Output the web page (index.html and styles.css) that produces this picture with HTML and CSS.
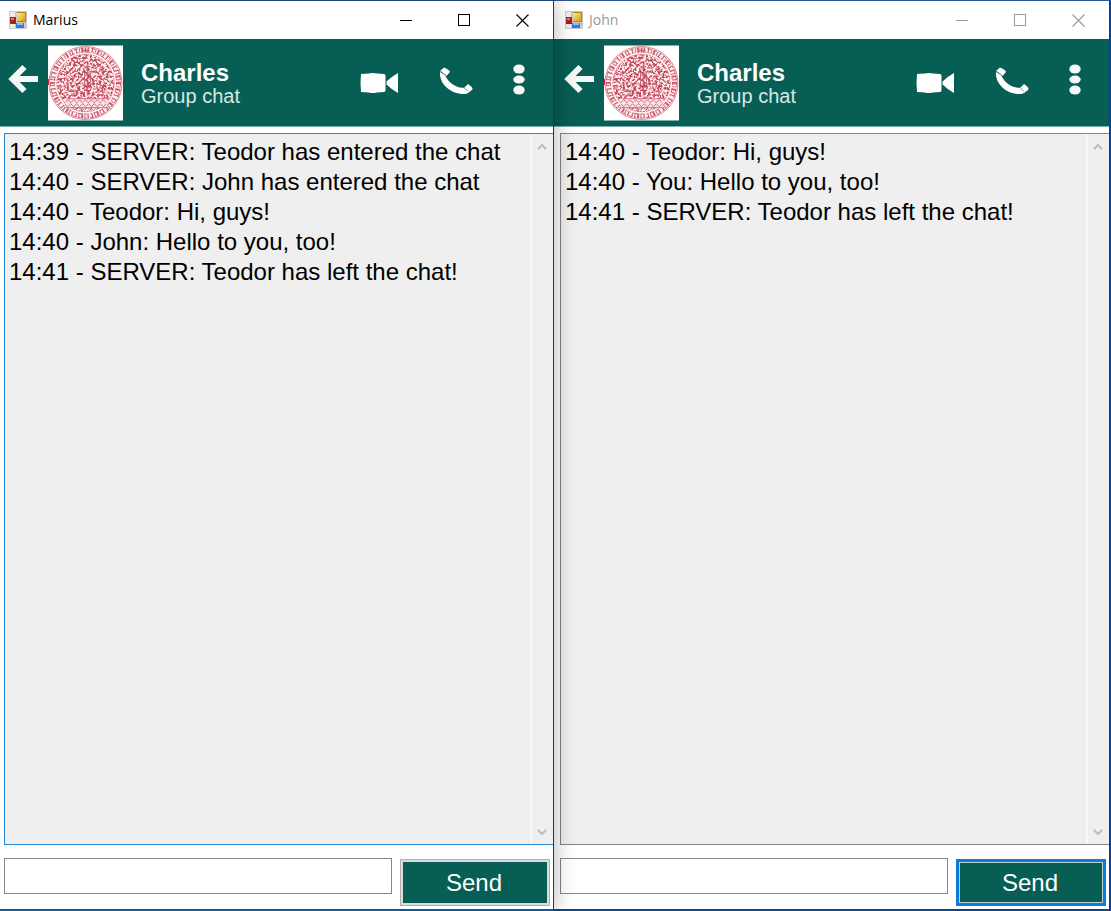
FILE: index.html
```html
<!DOCTYPE html>
<html lang="en">
<head>
<meta charset="utf-8">
<title>Group chat</title>
<link rel="stylesheet" href="styles.css">
</head>
<body>
<svg class="symbols" aria-hidden="true">
  <defs>
    <linearGradient id="gold" x2="1" y2="1"><stop offset="0" stop-color="#ffe89a"/><stop offset="1" stop-color="#dfa000"/></linearGradient>
    <filter id="engraving" x="0" y="0" width="1" height="1" color-interpolation-filters="sRGB">
      <feTurbulence type="fractalNoise" baseFrequency="0.42" numOctaves="2" seed="7"/>
      <feColorMatrix values="0 0 0 0 0.78  0 0 0 0 0.28  0 0 0 0 0.36  5 0 0 0 -2.1"/>
    </filter>
    <clipPath id="disc"><circle cx="38" cy="38" r="29"/></clipPath>
    <symbol id="app" viewBox="0 0 18 18">
      <rect width="18" height="18" rx="1" fill="#c9c9c9"/>
      <rect x="1" y="1" width="5" height="5" fill="#eee"/><rect x="1" y="13" width="5" height="4" fill="#eee"/>
      <rect x="1" y="6" width="6" height="7" fill="#a92019"/><rect x="2" y="7" width="3" height="2" fill="#e77a68"/>
      <rect x="8" y="1" width="9" height="10" fill="#b58514"/><rect x="8" y="2" width="8" height="8" fill="url(#gold)"/>
      <rect x="7" y="12" width="8" height="5" fill="#3b78dd"/><rect x="8" y="12" width="6" height="2" fill="#8db9ff"/>
    </symbol>
    <symbol id="minimize" viewBox="0 0 13 13"><path d="M0 6.500h12" stroke="currentColor"/></symbol>
    <symbol id="maximize" viewBox="0 0 13 13"><rect x=".5" y=".5" width="11" height="11" fill="none" stroke="currentColor"/></symbol>
    <symbol id="close" viewBox="0 0 13 13"><path d="M.5 .5l12 12M12.500 .5l-12 12" stroke="currentColor" stroke-width="1.100"/></symbol>
    <symbol id="back" viewBox="0 0 30 30"><path d="M16.500 3L4.500 15l12 12M4 15h26" fill="none" stroke="#f7f7f7" stroke-width="6"/></symbol>
    <symbol id="video" viewBox="0 0 38 22"><path d="M1 2L9 1.500Q12 .5 17 1.500L24 2Q25.500 2 25.500 4V18Q25.500 20 24 20L17 20.500Q12 21.500 9 20.500L1 20Q0 11 1 2zM26.500 9.500Q31 5 38 1v20Q31 17 26.500 12.500z" fill="#fff"/></symbol>
    <symbol id="phone" viewBox="0 0 34 28">
      <path d="M1 5C0 17 12 28 27 27L30 25L26 20.500C17 22 9 15 6 8z" fill="#fff"/>
      <path d="M1 4L5 .5Q11 3 11 5L7.500 9zM25.500 20.500L29 17Q35 21 33 23L29 26z" fill="#fff"/>
      <path d="M2 4.500l5 4M25 20.500l4 4" stroke="#075e54" stroke-width=".6"/>
    </symbol>
    <symbol id="more" viewBox="0 0 12 32"><g fill="#f7f7f7"><ellipse cx="6" cy="5" rx="5.700" ry="4.500"/><ellipse cx="6" cy="15.500" rx="5.700" ry="4"/><ellipse cx="6" cy="26" rx="5.700" ry="4.500"/></g></symbol>
    <symbol id="seal" viewBox="0 0 76 76">
      <rect width="76" height="76" fill="#fff"/>
      <circle cx="38" cy="38" r="37" fill="#fdf1f2" stroke="#dc8794" stroke-width="1"/>
      <g fill="none" stroke="#cf5a6b">
        <circle cx="38" cy="38" r="33.500" stroke-width="5" stroke-dasharray="1.300 2.200 .9 1.300 2 1.900 1 1.600 1.200 3"/>
        <circle cx="38" cy="38" r="35.500" stroke-width="1" stroke-dasharray="3 4 2 2 4 3"/>
        <circle cx="38" cy="38" r="31.500" stroke-width="1" stroke-dasharray="2 3 4 3 1 3"/>
        <circle cx="38" cy="38" r="29" stroke-width=".8" stroke-dasharray="2 1"/>
      </g>
      <g clip-path="url(#disc)"><rect x="8" y="8" width="60" height="60" filter="url(#engraving)"/></g>
      <g fill="none" stroke="#b94c5c" stroke-opacity=".75">
        <path d="M38 2v5M35 5h7M40 16v34" stroke-width="1.600"/>
        <path d="M37 24v20M43 26v20M31 13l3 4M45 12l-3 5M25 31l6-3M47 25l7 5M20 31l5 4-3 6M54 33l4 5-4 6M31 38l-2 11M49 38l2 11M20 46h9M50 46h9"/>
      </g>
      <rect x="17" y="54" width="43" height="9" fill="#fae3e6"/>
      <path d="M19 54h39M16 63h45M17 58l3-3 3 3 3-3 3 3 3-3 3 3 3-3 3 3 3-3 3 3 3-3 3 3 3-3 3 3M17 59l3 3 3-3 3 3 3-3 3 3 3-3 3 3 3-3 3 3 3-3 3 3 3-3 3 3 3-3" fill="none" stroke="#cf6474" stroke-width=".9"/>
      <rect y="34" width="1" height="6" fill="#dc1738"/>
    </symbol>
    <symbol id="up" viewBox="0 0 10 8"><path d="M1 6l4-4 4 4" fill="none" stroke="#bdbdbd" stroke-width="2.200"/></symbol>
    <symbol id="down" viewBox="0 0 10 8"><path d="M1 2l4 4 4-4" fill="none" stroke="#bdbdbd" stroke-width="2.200"/></symbol>
  </defs>
</svg>
<main class="desktop">
  <section class="window window-front" aria-label="Marius">
    <div class="titlebar">
      <svg class="app-icon"><use href="#app"/></svg>
      <h1 class="title">Marius</h1>
      <div class="controls">
        <button type="button" aria-label="Minimize"><svg><use href="#minimize"/></svg></button>
        <button type="button" aria-label="Maximize"><svg><use href="#maximize"/></svg></button>
        <button type="button" aria-label="Close"><svg><use href="#close"/></svg></button>
      </div>
    </div>
    <header class="chat-header">
      <button class="back" type="button" aria-label="Back"><svg><use href="#back"/></svg></button>
      <svg class="avatar" role="img" aria-label="University seal"><use href="#seal"/></svg>
      <div class="identity"><h2>Charles</h2><p>Group chat</p></div>
      <div class="actions">
        <button class="video" type="button" aria-label="Video call"><svg><use href="#video"/></svg></button>
        <button class="phone" type="button" aria-label="Voice call"><svg><use href="#phone"/></svg></button>
        <button class="more" type="button" aria-label="More options"><svg><use href="#more"/></svg></button>
      </div>
    </header>
    <div class="log log-active">
      <ol class="messages">
        <li>14:39 - SERVER: Teodor has entered the chat</li>
        <li>14:40 - SERVER: John has entered the chat</li>
        <li>14:40 - Teodor: Hi, guys!</li>
        <li>14:40 - John: Hello to you, too!</li>
        <li>14:41 - SERVER: Teodor has left the chat!</li>
      </ol>
      <div class="scrollbar">
        <button type="button" aria-label="Scroll up"><svg><use href="#up"/></svg></button>
        <button type="button" aria-label="Scroll down"><svg><use href="#down"/></svg></button>
      </div>
    </div>
    <form class="composer">
      <input type="text" aria-label="Message from Marius">
      <button class="send" type="button">Send</button>
    </form>
  </section>
  <section class="window window-rear" aria-label="John">
    <div class="titlebar">
      <svg class="app-icon"><use href="#app"/></svg>
      <h1 class="title">John</h1>
      <div class="controls">
        <button type="button" aria-label="Minimize"><svg><use href="#minimize"/></svg></button>
        <button type="button" aria-label="Maximize"><svg><use href="#maximize"/></svg></button>
        <button type="button" aria-label="Close"><svg><use href="#close"/></svg></button>
      </div>
    </div>
    <header class="chat-header">
      <button class="back" type="button" aria-label="Back"><svg><use href="#back"/></svg></button>
      <svg class="avatar" role="img" aria-label="University seal"><use href="#seal"/></svg>
      <div class="identity"><h2>Charles</h2><p>Group chat</p></div>
      <div class="actions">
        <button class="video" type="button" aria-label="Video call"><svg><use href="#video"/></svg></button>
        <button class="phone" type="button" aria-label="Voice call"><svg><use href="#phone"/></svg></button>
        <button class="more" type="button" aria-label="More options"><svg><use href="#more"/></svg></button>
      </div>
    </header>
    <div class="log">
      <ol class="messages">
        <li>14:40 - Teodor: Hi, guys!</li>
        <li>14:40 - You: Hello to you, too!</li>
        <li>14:41 - SERVER: Teodor has left the chat!</li>
      </ol>
      <div class="scrollbar">
        <button type="button" aria-label="Scroll up"><svg><use href="#up"/></svg></button>
        <button type="button" aria-label="Scroll down"><svg><use href="#down"/></svg></button>
      </div>
    </div>
    <form class="composer">
      <input type="text" aria-label="Message from John">
      <button class="send send-default" type="button">Send</button>
    </form>
  </section>
</main>
</body>
</html>
```
FILE: styles.css
```css
* { box-sizing: border-box; }
body { margin: 0; font-family: "Liberation Sans", Arial, sans-serif; color: #000; }
h1, h2, p, ol { margin: 0; padding: 0; font-weight: normal; }
button { padding: 0; border: 0; background: none; color: inherit; font: inherit; }
svg { display: block; }
.symbols { position: absolute; width: 0; height: 0; }

.desktop { display: grid; grid-template-columns: 554fr 557fr; min-height: 100vh; overflow: hidden; }
.window { display: flex; flex-direction: column; min-width: 0; background: #fff; border-top: 1px solid #1c4a70; border-bottom: 2px solid #105b95; }
.window-front { z-index: 1; border-right: 1px solid #24384a; box-shadow: 0 0 20px rgba(0, 0, 0, .3); }
.window-rear { border-top-color: #285594; border-bottom-color: #104587; border-right: 2px solid #0b3f94; }
.window-rear > .titlebar, .window-rear > .chat-header { padding-left: 2px; }

.titlebar { display: flex; align-items: center; height: 38px; font-family: "Open Sans", "Noto Sans", sans-serif; font-size: 14px; line-height: 20px; }
.app-icon { width: 18px; height: 18px; margin-left: 9px; }
.title { margin-left: 6px; font-size: 14px; }
.controls { display: flex; margin-left: auto; margin-right: 2px; }
.controls button { display: grid; place-items: center; width: 58px; height: 37px; }
.controls svg { width: 13px; height: 13px; }
.window-rear .titlebar { color: #999; }

.chat-header { display: flex; align-items: center; height: 88px; background: #075e54; color: #fff; border-bottom: 1px solid #7cafa9; }
.back { margin: 0 10px 8px 8px; }
.back svg { width: 30px; height: 30px; }
.avatar { width: 75px; height: 76px; }
.identity { margin: 2px 0 0 18px; white-space: nowrap; }
.identity h2 { font-size: 24px; font-weight: bold; line-height: 24px; }
.identity p { font-size: 20px; line-height: 22px; color: #d8e8e5; }
.actions { display: flex; align-items: center; margin-left: auto; margin-right: 28px; }
.video svg { width: 38px; height: 22px; }
.phone { margin: 0 40px 4px 41px; }
.phone svg { width: 34px; height: 28px; }
.more { margin-bottom: 6px; }
.more svg { width: 12px; height: 32px; }

.log { display: flex; flex: 1; margin: 6px 0 0 4px; background: #efefef; border: 1px solid #858585; border-right: 0; }
.log-active { border-color: #2487d6; }
.window-rear .log, .window-rear .composer { margin-left: 6px; }
.messages { flex: 1; min-width: 0; padding: 3px 0 0 4px; list-style: none; font-size: 24px; line-height: 30px; }
.scrollbar { display: flex; flex-direction: column; justify-content: space-between; align-items: center; width: 23px; padding: 9px 2px 8px 0; border-left: 2px solid #f8f8f8; }
.scrollbar svg { width: 10px; height: 8px; }

.composer { display: flex; align-items: flex-start; gap: 8px; margin: 13px 3px 3px 4px; }
.composer input { flex: 1; min-width: 0; height: 36px; padding: 0 6px; border: 1px solid #858585; border-radius: 0; background: #fff; font: 24px "Liberation Sans", Arial, sans-serif; }
.send { width: 150px; height: 47px; margin-top: 1px; padding-right: 2px; border: 1px solid #b0b0b0; background: #075e54; box-shadow: inset 0 0 0 2px #dcdcdc; color: #fff; font-size: 24px; line-height: 28px; }
.send-default { border: 3px solid #0c7be0; box-shadow: inset 0 0 0 1px #b9d2cf; }
```
